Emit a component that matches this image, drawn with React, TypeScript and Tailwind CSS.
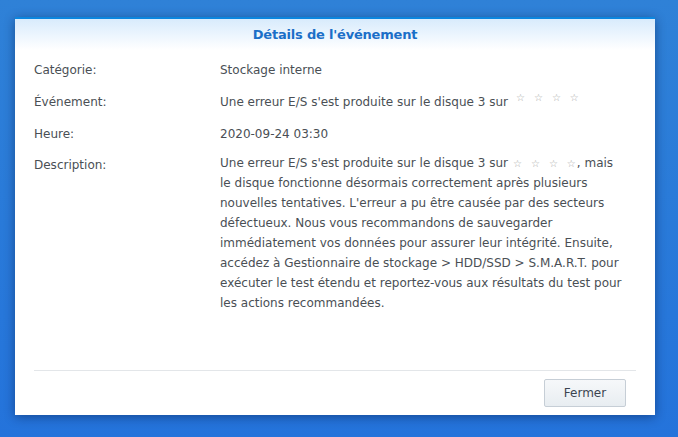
import React from "react";

const rows = [
  { label: "Catégorie:", value: "Stockage interne" },
  { label: "Heure:", value: "2020-09-24 03:30" },
];

function Stars({ raised }: { raised?: boolean }) {
  return (
    <span className={`inline-flex gap-[9px] text-[#a9a9a9] text-[10px] leading-none align-middle ${raised ? "relative -top-[5px] ml-[8px]" : "ml-[5px] mr-[1px]"}`}>
      <span>☆</span><span>☆</span><span>☆</span><span>☆</span>
    </span>
  );
}

export default function App() {
  return (
    <div className="w-[678px] h-[437px] bg-gradient-to-b from-[#2f81d7] to-[#2473db] pt-[17px] pl-[15px] font-['DejaVu_Sans',sans-serif]">
      <div className="w-[640px] h-[398px] bg-white flex flex-col shadow-[0_2px_10px_rgba(0,20,60,0.45)] border-t-2 border-[#0b86df]">
        {/* header */}
        <div className="h-[31px] bg-gradient-to-b from-[#d8ebfc] to-white flex items-center justify-center">
          <h1 className="text-[13px] font-bold text-[#1b6fc8] tracking-[-0.2px]">Détails de l'événement</h1>
        </div>

        {/* body */}
        <div className="flex-1 px-[19px] pt-[11px] text-[12px] text-[#4a4f55]">
          <div className="flex h-[32px]">
            <div className="w-[186px]">{rows[0].label}</div>
            <div>{rows[0].value}</div>
          </div>
          <div className="flex h-[32px]">
            <div className="w-[186px]">Événement:</div>
            <div>
              Une erreur E/S s'est produite sur le disque 3 sur
              <Stars raised />
            </div>
          </div>
          <div className="flex h-[31px]">
            <div className="w-[186px]">{rows[1].label}</div>
            <div>{rows[1].value}</div>
          </div>
          <div className="flex">
            <div className="w-[186px]">Description:</div>
            <div className="w-[412px] leading-[20px] -mt-[3px]">
              Une erreur E/S s'est produite sur le disque 3 sur<Stars />, mais<br />
              le disque fonctionne désormais correctement après plusieurs nouvelles tentatives. L'erreur a pu être causée par des secteurs défectueux. Nous vous recommandons de sauvegarder immédiatement vos données pour assurer leur intégrité. Ensuite, accédez à Gestionnaire de stockage &gt; HDD/SSD &gt; S.M.A.R.T. pour exécuter le test étendu et reportez-vous aux résultats du test pour les actions recommandées.
            </div>
          </div>
        </div>

        {/* footer */}
        <div className="mx-[19px] border-t border-[#e3e6e9] h-[45px] flex items-start justify-end pt-[8px] pr-[10px]">
          <button className="w-[82px] h-[28px] rounded-[2px] border border-[#c6ced6] bg-gradient-to-b from-[#f6f8fa] to-[#e8edf1] text-[12px] text-[#3b4450]">
            Fermer
          </button>
        </div>
      </div>
    </div>
  );
}
